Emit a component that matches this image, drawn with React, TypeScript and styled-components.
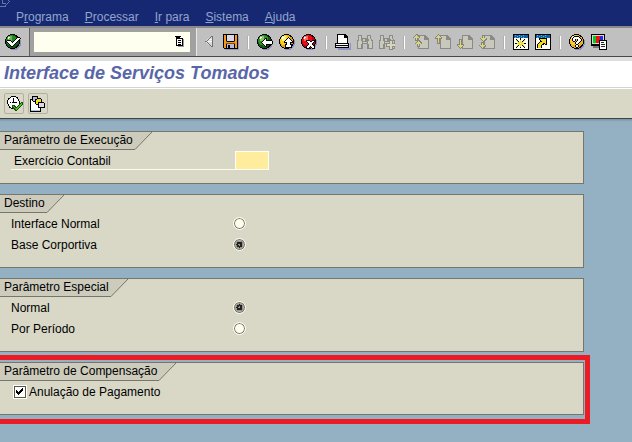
import React, { ReactNode } from "react";
import styled, { createGlobalStyle } from "styled-components";

const GlobalStyle = createGlobalStyle`
  * { box-sizing: border-box; }
  body {
    margin: 0;
    background: #94b0c3;
    font-family: "Liberation Sans", Arial, sans-serif;
    font-size: 12px;
    color: #000;
  }
  button, input { font: inherit; color: inherit; }
`;

const Page = styled.div`
  display: flex;
  flex-direction: column;
  min-height: 100vh;
`;

const MenuBar = styled.nav`
  display: flex;
  align-items: flex-start;
  height: 26px;
  background: #172873;
`;

const SystemButton = styled.button`
  width: 16px;
  height: 8px;
  padding: 0;
  border: 0;
  background: none;
  svg { display: block; }
`;

const MenuList = styled.div`
  display: flex;
  gap: 16px;
  padding-top: 9px;
`;

const MenuItem = styled.button`
  padding: 0;
  border: 0;
  background: none;
  color: #93a5cc;
  font-size: 12px;
  line-height: 16px;
`;

const Toolbar = styled.div`
  display: flex;
  height: 31px;
  background: #c0c0c0;
  border-top: 2px solid #8a8a8a;
  border-bottom: 1px solid #484848;
`;

const EnterCell = styled.div`
  display: flex;
  flex: none;
  align-items: center;
  width: 30px;
  padding-left: 2px;
  border-right: 1px solid #606060;
`;

const CommandCell = styled.div`
  display: flex;
  flex: none;
  align-items: center;
  width: 166px;
  padding: 0 6px 1px 4px;
  background: #a1a1a1;
`;

const CommandBox = styled.div`
  display: flex;
  align-items: center;
  flex: 1;
  min-width: 0;
  height: 20px;
  padding-right: 3px;
  background: #fffff0;
`;

const CommandInput = styled.input`
  flex: 1;
  min-width: 0;
  height: 18px;
  padding: 0 4px;
  border: 0;
  outline: 0;
  background: transparent;
`;

const HistoryButton = styled.button`
  flex: none;
  width: 14px;
  height: 16px;
  padding: 1px 2px;
  border: 0;
  background: none;
  svg { display: block; }
`;

const IconStrip = styled.div`
  display: flex;
  align-items: center;
  flex: 1;
  min-width: 0;
  padding-left: 1px;
  border-left: 1px solid #e8e8e8;
`;

const IconButton = styled.button`
  flex: none;
  width: 22px;
  height: 22px;
  padding: 3px;
  border: 0;
  background: none;
  svg { display: block; }
`;

const Separator = styled.span`
  flex: none;
  width: 2px;
  height: 13px;
  margin: 0 5px;
  background: #fff;
  border-left: 1px solid #b0b0b0;
`;

const TitleBar = styled.header`
  height: 32px;
  padding: 1px 4px 0;
  background: #fff;
  border-top: 4px solid #dedede;
  border-bottom: 1px solid #fff;
  box-shadow: inset 0 -1px 0 #d4d4d4;
`;

const Title = styled.h1`
  margin: 0;
  color: #5966a8;
  font-size: 18px;
  line-height: 22px;
  font-style: italic;
  font-weight: bold;
`;

const ActionBar = styled.div`
  display: flex;
  align-items: center;
  gap: 4px;
  height: 30px;
  padding-left: 4px;
  background: #d9d8c7;
  border-bottom: 1px solid #404442;
`;

const ActionButton = styled.button`
  width: 20px;
  height: 21px;
  padding: 1px;
  border: 1px solid #b1b0a1;
  border-radius: 2px;
  background: none;
  svg { display: block; }
`;

const Content = styled.main`
  display: flex;
  flex-direction: column;
  flex: 1;
  padding-top: 12px;
  background: linear-gradient(#7894a4, #94b0c3 3px);
`;

const Panels = styled.div`
  display: flex;
  flex-direction: column;
  gap: 10px;
  margin-right: 48px;
`;

const Highlight = styled.div`
  margin: 3px 42px 18px 0;
  padding: 2px 1px 4px 0;
  border: 5px solid #ed1c24;
  border-left: 0;
`;

const PanelBox = styled.section`
  padding-bottom: 12px;
  background: #d9d8c7;
  border: 1px solid #77766c;
  border-left: 0;
`;

const TabRow = styled.div`
  display: flex;
  height: 18px;
  svg { display: block; flex: none; }
`;

const TabTitle = styled.h2`
  margin: 0;
  padding: 0 1px 0 4px;
  background: #cccbbc;
  border-bottom: 1px solid #77766c;
  font-size: 12px;
  line-height: 17px;
  font-weight: normal;
  white-space: nowrap;
`;

const Row = styled.div`
  display: grid;
  grid-template-columns: 222px auto;
  align-items: center;
  justify-content: start;
  height: 21px;
  padding-left: 11px;
`;

const FieldRow = styled(Row)`
  grid-template-columns: 224px auto;
`;

const FieldLabel = styled.label`
  height: 19px;
  padding-left: 3px;
  border-bottom: 1px solid #fbfbe8;
  line-height: 20px;
`;

const YearInput = styled.input`
  width: 34px;
  height: 19px;
  padding: 0 2px;
  border: 1px solid #fffff4;
  border-radius: 0;
  outline: 0;
  background: #ffec9c;
`;

const Radio = styled.input`
  appearance: none;
  width: 13px;
  height: 13px;
  margin: 0;
  border: 1px solid #fdfdf0;
  border-radius: 50%;
  background: #fffff0;
  box-shadow: inset 0 0 0 1px #77766c;
  &:checked {
    background: radial-gradient(circle, #9a9a90 0 1px, #222 1px 3px, #96958a 3px 4px, #b8b7a9 4px);
  }
`;

const CheckRow = styled.div`
  display: flex;
  align-items: center;
  gap: 2px;
  height: 21px;
  padding-left: 13px;
`;

const CheckHolder = styled.span`
  display: grid;
  svg { grid-area: 1 / 1; place-self: center; pointer-events: none; visibility: hidden; }
  input:checked + svg { visibility: visible; }
`;

const CheckInput = styled.input`
  grid-area: 1 / 1;
  appearance: none;
  width: 14px;
  height: 14px;
  margin: 0;
  border: 1px solid #fffff4;
  background: #fff;
  box-shadow: inset 0 0 0 1px #55554c;
`;

const Glyph = ({ children, w = 16, h = 16 }: { children: ReactNode; w?: number; h?: number }) => (
  <svg width={w} height={h} viewBox={`0 0 ${w} ${h}`} shapeRendering="crispEdges" aria-hidden="true">
    {children}
  </svg>
);

const palette: Record<string, string> = {
  k: "#000000",
  w: "#ffffff",
  p: "#b9b8dc",
  v: "#dcd8ea",
  y: "#f0df20",
  b: "#a8c8ea",
  g: "#8c8c86",
  l: "#c9c9be",
  o: "#f29a20",
  n: "#8a5208",
  s: "#6278ac",
};

/* Draws small bitmap art: one path per colour, one square per letter. */
const Bitmap = ({ rows, top = 0 }: { rows: string[]; top?: number }) => {
  const paths: Record<string, string> = {};
  rows.forEach((row, y) =>
    [...row].forEach((c, x) => {
      if (palette[c]) paths[c] = (paths[c] ?? "") + `M${x} ${y + top}h1v1h-1z`;
    })
  );
  return <>{Object.entries(paths).map(([c, d]) => <path key={c} d={d} fill={palette[c]} />)}</>;
};

const Ball = ({ dark, mid, light, children }: { dark: string; mid: string; light: string; children: ReactNode }) => (
  <Glyph>
    <circle cx="9" cy="9" r="7" fill="#8d8fc0" />
    <circle cx="7.5" cy="7.5" r="7.5" fill="#000" />
    <circle cx="7.5" cy="7.5" r="6.5" fill={dark} />
    <circle cx="6.5" cy="6.5" r="5.2" fill={mid} />
    <circle cx="5" cy="4.5" r="2.5" fill={light} />
    <path d="M3 3h2v1H4v1H3z" fill="#fff" />
    {children}
  </Glyph>
);

const systemArt = [
  "..s.....s..",
  "..s......s.",
  "..s.....s..",
  "..ssss.s...",
  "......s....",
  ".....s.....",
  "ssssss.....",
];
const checkArt = [
  "............kkk.",
  "...........kwwwk",
  "..........kwwwk.",
  "..kkkk...kwwwk..",
  ".kwwwwk.kwwwk...",
  "..kwwwwkwwwk....",
  "...kwwwwwwk.....",
  "....kwwwwk......",
  ".....kwwk.......",
  "......kk........",
];
const backArt = [
  "........kk......",
  ".......kwk......",
  "......kwwkkkkkk.",
  ".....kwwwwwwwwwk",
  "....kwwwwwwwwwwk",
  ".....kwwwwwwwwwk",
  "......kwwkkkkkk.",
  ".......kwk......",
  "........kk......",
];
const upArt = [
  ".........k......",
  "........kwk.....",
  ".......kwwwk....",
  "......kwwwwwk...",
  ".....kwwwwwwwk..",
  ".....kkkwwwkkk..",
  ".......kwwwk....",
  "......kkwwwkk...",
  "......kwwwwwk...",
  "......kwwwwwk...",
  "......kkkkkkk...",
];
const crossArt = [
  ".....kkkk..kkk..",
  ".....kwwwkkwwk..",
  "......kwwwwwk...",
  ".......kwwwk....",
  ".......kwwwk....",
  "......kwwwwwk...",
  ".....kwwwkwwwk..",
  ".....kwwk.kwwk..",
  ".....kkk...kkk..",
];
const questionArt = [
  ".....kkkkk......",
  "....kwwwwwk.....",
  "...kwwwwwwwk....",
  "...kwwk.kwwwk...",
  "...kwwk.kwwwk...",
  "....kk.kwwwk....",
  "......kwwwk.....",
  "......kwwk......",
  ".......kk.......",
  "......kwwk......",
  "......kwwk......",
  ".......kk.......",
];
const findArt = [
  ".gggg.....gggg..",
  ".gllg.....gllg..",
  ".gllg.....gllg..",
  ".gllgggggggllg..",
  ".gllggllggggllg.",
  "ggllggllggggllgg",
  "gllllggggggllllg",
  "gllllgllllgllllg",
  "gllllggggggllllg",
  "glllgg....gglllg",
  "glllgg....gglllg",
  "glllgg....gglllg",
  "glllgg....gglllg",
  "gggggg....gggggg",
];
const variantArt = [
  "..kkkkkk........",
  "..kppppk........",
  "..kppppkkkk.....",
  "kkkppkkyyyyk....",
  "kwkppkyyyyyk....",
  "kwwkkkyyyyyk....",
  "kwwwwkyykkkkkk..",
  "kwwwwkyykvvvvvk.",
  "kwwwwwkkkvvvvvk.",
  "kwwwwwwwkvvvvvk.",
  "kwwwwwwwkvvvvvk.",
  "kwwwwwwwkkkkkkk.",
  "kwwwwwwwwwk.....",
  "kwwwwwwwwwk.....",
  "kbbbbbbbbbk.....",
  "kkkkkkkkkkk.....",
];
const saveArt = [
  "kkkkkkkkkkkkkkk.",
  "kookvvvvvvvkook.",
  "kookvvvvvvvkook.",
  "kookvvvvvvvkook.",
  "kookvvvvvvvkook.",
  "kookvvvvvvvkook.",
  "kookvvvvvvvkook.",
  "koonkkkkkkknook.",
  "koooooooooooook.",
  "koonnnnnnnnnook.",
  "kookpppppppkook.",
  "kookpkkppppkook.",
  "kookpkkppppkook.",
  "kookpkkppppkook.",
  ".kkkkkkkkkkkkkk.",
];
const starArt = [
  ".......k........",
  "...k...k...k....",
  "...yk..y..ky....",
  "....yk.y.ky.....",
  ".....yyyyy......",
  "..kkyyywyyykk...",
  ".....yyyyy......",
  "....yk.y.ky.....",
  "...yk..y..ky....",
  "...k...k...k....",
];
const shortcutArt = [
  "....kkkkkkkk....",
  "....kyyyyyyk....",
  ".....kyyyyyk....",
  ".....kkyyyyk....",
  "....kyyyyyyk....",
  "...kyyyykkyk....",
  "..kyyyykk.kk....",
  "..kyyyk.........",
  "..kyyyk.........",
  "..kyyyk.........",
];

const SystemIcon = () => <Glyph w={11} h={8}><Bitmap rows={systemArt} /></Glyph>;
const EnterIcon = () => <Ball dark="#0d5a14" mid="#218a24" light="#62b84c"><Bitmap rows={checkArt} top={3} /></Ball>;
const BackIcon = () => <Ball dark="#0d5a14" mid="#2e922c" light="#86c860"><Bitmap rows={backArt} top={4} /></Ball>;
const ExitIcon = () => <Ball dark="#e0a40c" mid="#fbd01c" light="#fff27a"><Bitmap rows={upArt} top={3} /></Ball>;
const CancelIcon = () => <Ball dark="#b80410" mid="#ea0a18" light="#ff6a58"><Bitmap rows={crossArt} top={6} /></Ball>;
const HelpIcon = () => <Ball dark="#f0b01c" mid="#fcc838" light="#fff090"><Bitmap rows={questionArt} top={2} /></Ball>;
const PrevIcon = () => (
  <Glyph>
    <path d="M11 2v11L4 8V7z" fill="#dadada" />
    <path d="M10 2h1v1h-1zM9 3h1v1H9zM8 4h1v1H8zM7 5h1v1H7zM6 6h1v1H6zM4 7h2v1H4zM6 8h1v1H6zM7 9h1v1H7zM8 10h1v1H8zM9 11h1v1H9zM10 12h1v1h-1zM11 2h1v11h-1z" fill="#6e6e6e" />
    <path d="M6 7h5v1H6zM8 5h3v1H8z" fill="#f4f4f4" />
  </Glyph>
);
const SaveIcon = () => (
  <Glyph>
    <path d="M2 2h14v14H2z" fill="#9698bb" />
    <Bitmap rows={saveArt} />
  </Glyph>
);
const PrintIcon = () => (
  <Glyph>
    <path d="M3 14h12V9h1v7H3z" fill="#9193c2" />
    <path d="M2 0h8l3 3v6h1v5H0V9h2z" fill="#000" />
    <path d="M3 1h6v3h3v5H3z" fill="#fff" />
    <path d="M1 10h12v1H1z" fill="#fff" />
    <path d="M1 12h12v1H1z" fill="#e6e6f2" />
  </Glyph>
);
const FindIcon = () => <Glyph><Bitmap rows={findArt} top={1} /></Glyph>;
const FindNextIcon = () => (
  <Glyph>
    <Bitmap rows={findArt} top={1} />
    <path d="M10 6h4v3h2v4h-2v3h-4v-3H7V9h3z" fill="#8c8c86" />
    <path d="M11 7h2v3h3v2h-3v3h-2v-3H8v-2h3z" fill="#d8d6b8" />
  </Glyph>
);
const Sheet = ({ children }: { children: ReactNode }) => (
  <Glyph>
    <path d="M5 1h7l4 4v10H5z" fill="#8b8b84" />
    <path d="M6 2h5v4h4v8H6z" fill="#c9c8bc" />
    {children}
  </Glyph>
);
const Arrow = ({ x, y, down, short }: { x: number; y: number; down?: boolean; short?: boolean }) => (
  <g transform={`translate(${x} ${y})${down ? " scale(1 -1)" : ""}`}>
    <path d={short ? "M0 3l3-3h1l3 3v1H5v3H2V4H0z" : "M0 4l3-4h1l3 4v1H5v5H2V5H0z"} fill="#85857c" />
    <path d={short ? "M1 3h1V2h1V1h1v1h1v1h1v1H4v2H3V4H1z" : "M1 4V3h1V2h1V1h1v1h1v1h1v1H4v5H3V4z"} fill="#dad67c" />
  </g>
);
const FirstPageIcon = () => <Sheet><Arrow x={0} y={0} short /><Arrow x={2} y={6} short /></Sheet>;
const PrevPageIcon = () => <Sheet><Arrow x={0} y={0} /></Sheet>;
const NextPageIcon = () => <Sheet><Arrow x={0} y={15} down /></Sheet>;
const LastPageIcon = () => <Sheet><Arrow x={1} y={8} down short /><Arrow x={0} y={15} down short /></Sheet>;
const WindowFrame = ({ children }: { children: ReactNode }) => (
  <Glyph>
    <path d="M0 0h16v16H0z" fill="#000" />
    <path d="M1 4h14v11H1z" fill="#fffff4" />
    <path d="M1 1h14v3H1z" fill="#0b62a8" />
    <path d="M2 1h1v1H2zM4 2h1v1H4zM6 1h1v1H6zM8 2h1v1H8zM10 1h1v1h-1zM2 3h1v1H2zM6 3h1v1H6zM10 3h1v1h-1z" fill="#68a8d8" />
    {children}
  </Glyph>
);
const NewSessionIcon = () => <WindowFrame><Bitmap rows={starArt} top={4} /></WindowFrame>;
const ShortcutIcon = () => <WindowFrame><Bitmap rows={shortcutArt} top={4} /></WindowFrame>;
const LayoutIcon = () => (
  <Glyph>
    <path d="M0 0h14v12H0z" fill="#000" />
    <path d="M1 1h12v9H1z" fill="#d8d8d8" />
    <path d="M2 2h3v7H2z" fill="#08c818" />
    <path d="M5 2h4v7H5z" fill="#f01018" />
    <path d="M9 2h3v7H9z" fill="#1830e8" />
    <path d="M2 12h8v2H2z" fill="#777" />
    <path d="M8 6h8v10H8z" fill="#000" />
    <path d="M9 7h6v8H9z" fill="#fff" />
    <path d="M10 8h3v1h-3zM10 10h4v1h-4zM10 12h4v1h-4z" fill="#222" />
  </Glyph>
);
const HistoryIcon = () => (
  <Glyph w={10} h={12}>
    <path d="M3 3h6v8H3z" fill="#9a9aa4" />
    <path d="M1 2h7v8H1z" fill="#000" />
    <path d="M2 3h5v6H2z" fill="#fff" />
    <path d="M0 0h6v1H5v1H4v1H2V2H1V1H0zM3 4h3v1H3zM3 6h3v1H3zM3 8h3v1H3z" fill="#000" />
  </Glyph>
);
const ExecuteIcon = () => (
  <Glyph w={17} h={17}>
    <path d="M5 1h5v1h2v2h1v2h1v4h-1v2h-2v2H5v-1H3v-2H2V9H1V5h1V3h2V2h1z" fill="#000" />
    <path d="M5 2h5v1h1v1h1v2h1v4h-1v2h-2v1H5v-1H4v-1H3V9H2V5h1V4h1V3h1z" fill="#fff" />
    <path d="M7 3h1v4h3v1H6V7h1zM4 7h1v1H4zM7 11h1v1H7z" fill="#000" />
    <path d="M6 10h2l2 2 5-5h2v2l-6 7h-2l-3-3z" fill="#164c0c" />
    <path d="M7 11h1l2 3 5-6h1v1l-5 6h-1z" fill="#54bc28" />
  </Glyph>
);
const VariantIcon = () => <Glyph><Bitmap rows={variantArt} /></Glyph>;

const groups: { label: string; Icon: () => React.JSX.Element }[][] = [
  [{ label: "Recolher", Icon: PrevIcon }, { label: "Gravar", Icon: SaveIcon }],
  [{ label: "Voltar", Icon: BackIcon }, { label: "Encerrar", Icon: ExitIcon }, { label: "Cancelar", Icon: CancelIcon }],
  [{ label: "Imprimir", Icon: PrintIcon }, { label: "Procurar", Icon: FindIcon }, { label: "Continuar procura", Icon: FindNextIcon }],
  [
    { label: "Primeira página", Icon: FirstPageIcon },
    { label: "Página anterior", Icon: PrevPageIcon },
    { label: "Próxima página", Icon: NextPageIcon },
    { label: "Última página", Icon: LastPageIcon },
  ],
  [{ label: "Novo modo", Icon: NewSessionIcon }, { label: "Criar atalho", Icon: ShortcutIcon }],
  [{ label: "Auxílio", Icon: HelpIcon }, { label: "Layout local", Icon: LayoutIcon }],
];

const menus = ["Programa", "Processar", "Ir para", "Sistema", "Ajuda"];

const MenuLabel = ({ text }: { text: string }) =>
  text === "Programa" ? <>P<u>r</u>ograma</> : <><u>{text[0]}</u>{text.slice(1)}</>;

const Panel = ({ title, children }: { title: string; children: ReactNode }) => (
  <PanelBox aria-label={title}>
    <TabRow>
      <TabTitle>{title}</TabTitle>
      <svg width="18" height="18" viewBox="0 0 18 18" aria-hidden="true">
        <path d="M0 0H18L1 17.500H0z" fill="#cccbbc" />
        <path d="M0 17.500H1L18 0" fill="none" stroke="#77766c" />
      </svg>
    </TabRow>
    {children}
  </PanelBox>
);

const RadioRow = ({ id, name, label, checked }: { id: string; name: string; label: string; checked?: boolean }) => (
  <Row>
    <label htmlFor={id}>{label}</label>
    <Radio type="radio" id={id} name={name} defaultChecked={checked} />
  </Row>
);

export default function App() {
  return (
    <Page>
      <GlobalStyle />
      <MenuBar>
        <SystemButton aria-label="Menu do sistema"><SystemIcon /></SystemButton>
        <MenuList>
          {menus.map((m) => (
            <MenuItem key={m}><MenuLabel text={m} /></MenuItem>
          ))}
        </MenuList>
      </MenuBar>
      <Toolbar>
        <EnterCell>
          <IconButton aria-label="Enter"><EnterIcon /></IconButton>
        </EnterCell>
        <CommandCell>
          <CommandBox>
            <CommandInput type="text" aria-label="Comando" />
            <HistoryButton aria-label="Histórico"><HistoryIcon /></HistoryButton>
          </CommandBox>
        </CommandCell>
        <IconStrip>
          {groups.map((group, i) => (
            <React.Fragment key={i}>
              {i > 0 && <Separator />}
              {group.map(({ label, Icon }) => (
                <IconButton key={label} aria-label={label}><Icon /></IconButton>
              ))}
            </React.Fragment>
          ))}
        </IconStrip>
      </Toolbar>
      <TitleBar>
        <Title>Interface de Serviços Tomados</Title>
      </TitleBar>
      <ActionBar>
        <ActionButton aria-label="Executar"><ExecuteIcon /></ActionButton>
        <ActionButton aria-label="Buscar variante"><VariantIcon /></ActionButton>
      </ActionBar>
      <Content>
        <Panels>
          <Panel title="Parâmetro de Execução">
            <FieldRow>
              <FieldLabel htmlFor="year">Exercício Contabil</FieldLabel>
              <YearInput id="year" type="text" />
            </FieldRow>
          </Panel>
          <Panel title="Destino">
            <RadioRow id="dest-interface" name="dest" label="Interface Normal" />
            <RadioRow id="dest-base" name="dest" label="Base Corportiva" checked />
          </Panel>
          <Panel title="Parâmetro Especial">
            <RadioRow id="mode-normal" name="mode" label="Normal" checked />
            <RadioRow id="mode-period" name="mode" label="Por Período" />
          </Panel>
        </Panels>
        <Highlight>
          <Panel title="Parâmetro de Compensação">
            <CheckRow>
              <CheckHolder>
                <CheckInput type="checkbox" id="cancel-payment" defaultChecked />
                <Glyph w={8} h={8}>
                  <path d="M0 2h1v1h1v1h1V3h1V2h1V1h1V0h1v3H6v1H5v1H4v1H3v1H2V6H1V5H0z" fill="#000" />
                </Glyph>
              </CheckHolder>
              <label htmlFor="cancel-payment">Anulação de Pagamento</label>
            </CheckRow>
          </Panel>
        </Highlight>
      </Content>
    </Page>
  );
}
